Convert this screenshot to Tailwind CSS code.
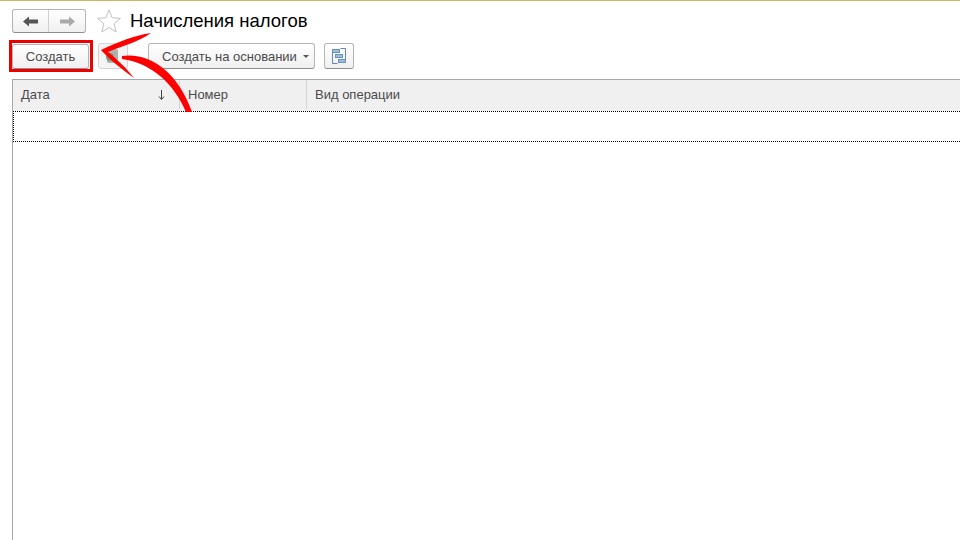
<!DOCTYPE html>
<html lang="ru">
<head>
    <meta charset="UTF-8">
    <title>Начисления налогов</title>
    <script src="https://cdn.jsdelivr.net/npm/@tailwindcss/browser@4"></script>
</head>
<body class="bg-white font-['Liberation_Sans',Arial,sans-serif] text-[#4b4b4b]">
<div class="relative w-[960px] h-[540px] overflow-hidden border-t border-[#c9b866]">
    <!-- title row -->
    <div class="flex items-center h-[24px] mt-[8px] pl-[12px]">
        <div class="flex w-[74px] h-[24px] rounded-[3px] border border-[#b5b5b5] border-b-[#8f8f8f] bg-gradient-to-b from-white to-[#f0f0f0]">
            <div class="w-[36px] flex items-center justify-center border-r border-[#cfcfcf]">
                <svg width="15" height="11" viewBox="0 0 15 11"><path d="M0 5.500l6-5V3.500h9v4H6v3z" fill="#555"/></svg>
            </div>
            <div class="flex-1 flex items-center justify-center">
                <svg width="15" height="11" viewBox="0 0 15 11"><path d="M15 5.500l-6-5V3.500H0v4h9v3z" fill="#a9a9a9"/></svg>
            </div>
        </div>
        <svg class="ml-[11px]" width="24" height="24" viewBox="0 0 24 24"><path d="M12 1l3.100 7.700 8.400.7-6.400 5.300 2 8.300-7.100-4.500-7.100 4.500 2-8.300L.5 9.400l8.400-.7z" fill="#fff" stroke="#bcc3ca"/></svg>
        <h1 class="ml-[9px] text-[18.500px] leading-[24px] text-black">Начисления налогов</h1>
    </div>
    <!-- command bar -->
    <div class="flex items-center h-[26px] mt-[10px] pl-[12px]">
        <button class="w-[77px] h-[25px] pt-[1px] rounded-[3px] border border-[#b5b5b5] border-b-[#8f8f8f] bg-gradient-to-b from-white to-[#f0f0f0] text-[13px] text-[#4b4b4b]">Создать</button>
        <div class="ml-[9px] w-[30px] h-[26px] rounded-[3px] border border-[#d4d4d4] bg-[#f4f4f4] flex items-center justify-center">
            <svg class="ml-[-3px]" width="14" height="16" viewBox="0 0 14 16"><rect x="2" y="1" width="11" height="14" rx="2" fill="#b0b0b0"/><circle cx="5" cy="9" r="4" fill="#7f9a7a"/></svg>
        </div>
        <button class="ml-[20px] w-[167px] h-[26px] pt-[1px] rounded-[3px] border border-[#b5b5b5] border-b-[#8f8f8f] bg-gradient-to-b from-white to-[#f0f0f0] text-[13px] text-[#4b4b4b] flex items-center pl-[13px]">
            Создать на основании
            <span class="ml-[6px] w-0 h-0 border-x-[3px] border-x-transparent border-t-[3px] border-t-[#555]"></span>
        </button>
        <button class="ml-[9px] w-[30px] h-[26px] rounded-[3px] border border-[#b5b5b5] border-b-[#8f8f8f] bg-gradient-to-b from-white to-[#f0f0f0] flex items-center justify-center">
            <svg width="16" height="16" viewBox="0 0 16 16" fill="none"><path d="M1.500 4v11.500h5M9.500 .5h5V11" stroke="#5d8ab5"/><rect x="1.500" y="1.500" width="7" height="3" fill="#9dbcd9" stroke="#6a93b8"/><rect x="4.500" y="6.500" width="7" height="3" fill="#9dbcd9" stroke="#6a93b8"/><rect x="7.500" y="11.500" width="7" height="3" fill="#9dbcd9" stroke="#6a93b8"/></svg>
        </button>
    </div>
    <!-- list -->
    <div class="mt-[10px] ml-[12px] h-[500px] border-l border-t border-[#a8a8a8]">
        <div class="flex h-[31px] pb-[2px] bg-[#f0f0f0] text-[13px] text-[#4b4b4b]">
            <div class="w-[167px] pl-[8px] pr-[14px] border-r border-[#d6d6d6] flex justify-between items-center">
                <span>Дата</span>
                <svg width="7" height="10" viewBox="0 0 7 10"><path d="M3.500 0v9M1 6.500l2.500 3 2.500-3" fill="none" stroke="#444"/></svg>
            </div>
            <div class="w-[127px] pl-[8px] border-r border-[#d6d6d6] flex items-center">Номер</div>
            <div class="flex-1 pl-[8px] flex items-center">Вид операции</div>
        </div>
        <div class="h-[31px] border-y border-l border-dotted border-black"></div>
    </div>
    <!-- annotations -->
    <div class="absolute left-[9px] top-[39px] w-[84px] h-[32px] border-[3px] border-[#ee0000]"></div>
    <svg class="absolute left-0 top-[-1px]" width="960" height="540" viewBox="0 0 960 540">
        <path d="M151 33C135 35 118 42 101 50C108 58 120 68 134 78C128 70 118 60 108 52C122 46 138 42 151 33z" fill="#f00"/>
        <path d="M122 56C150 52 178 72 192 112L186 112C174 84 152 63 122 59z" fill="#f00"/>
    </svg>
</div>
</body>
</html>
